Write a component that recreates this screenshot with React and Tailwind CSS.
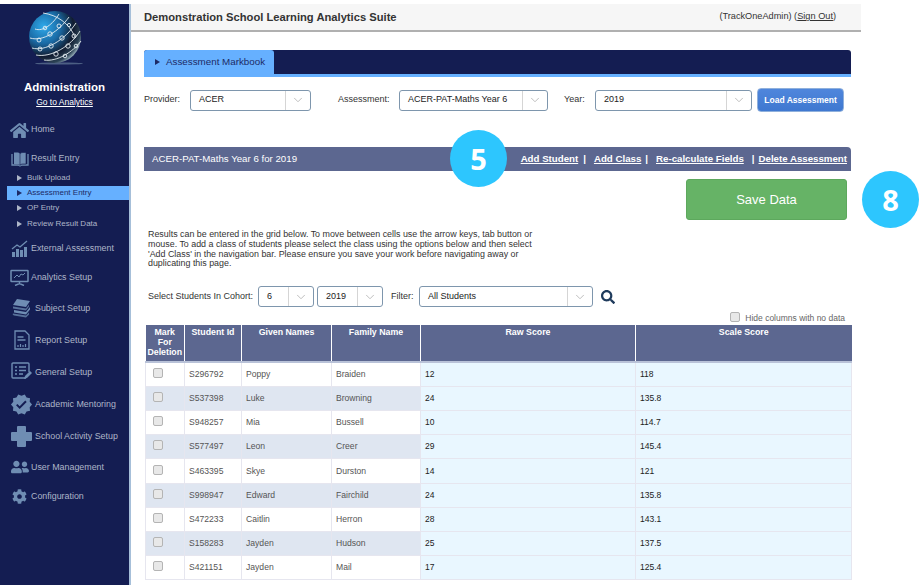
import React from "react";
import { FaHome, FaCog, FaUserFriends, FaSearch } from "react-icons/fa";
import { MdVerified } from "react-icons/md";
import { ChevronDown } from "lucide-react";

const ACCENT = "#2dc6fe";

const Globe = () => (
  <svg width="58" height="56" viewBox="0 0 58 56">
    <defs>
      <radialGradient id="ball" cx="0.28" cy="0.3" r="0.8">
        <stop offset="0" stopColor="#2fa9ea" />
        <stop offset="0.4" stopColor="#1a6ba6" />
        <stop offset="0.72" stopColor="#111c30" />
        <stop offset="0.9" stopColor="#2d4456" />
        <stop offset="1" stopColor="#9db4bf" />
      </radialGradient>
    </defs>
    <ellipse cx="32" cy="53.500" rx="24" ry="1" fill="#4c5f83" />
    <circle cx="28" cy="27" r="26" fill="url(#ball)" />
    <g fill="none" stroke="#e6eef3" strokeWidth="0.9">
      <path d="M5 38 C18 42 38 30 49 13" />
      <path d="M3 28 C16 32 32 21 42 7" />
      <path d="M9 45 C24 48 44 36 53 21" />
      <path d="M17 50 C30 52 46 42 54 31" />
      <path d="M16 3 C30 5 42 13 48 27" />
      <path d="M8 19 C16 22 26 14 32 4" />
      <circle cx="13" cy="39" r="2" />
      <circle cx="24" cy="36" r="2.200" />
      <circle cx="35" cy="28" r="2.200" />
      <circle cx="12" cy="30" r="2" />
      <circle cx="23" cy="24" r="2.200" />
      <circle cx="32" cy="16" r="2" />
      <circle cx="29" cy="44" r="2.200" />
      <circle cx="41" cy="36" r="2.200" />
      <circle cx="47" cy="26" r="2" />
      <circle cx="42" cy="15" r="1.600" />
      <circle cx="38" cy="46" r="1.800" />
      <circle cx="49" cy="36" r="1.800" />
      <circle cx="18" cy="18" r="1.800" />
    </g>
  </svg>
);

const BookIcon = () => (
  <svg width="18" height="17" viewBox="0 0 18 17" fill="none" stroke="currentColor" strokeWidth="1.300">
    <path d="M1 3v11h6c1 0 2 .5 2 1.500 0-1 1-1.500 2-1.500h6V3" />
    <path d="M3 1.500h3c1.500 0 3 .5 3 2v11c0-1-1.500-1.500-3-1.500H3z" fill="currentColor" stroke="none" />
    <path d="M15 1.500h-3c-1.500 0-3 .5-3 2v11c0-1 1.500-1.500 3-1.500h3z" fill="currentColor" stroke="#141d52" strokeWidth="0.6" />
  </svg>
);

const BarsIcon = () => (
  <svg width="18" height="17" viewBox="0 0 18 17" fill="currentColor">
    <rect x="1" y="12" width="3" height="5" />
    <rect x="5" y="9" width="3" height="8" />
    <rect x="9" y="10" width="3" height="7" />
    <rect x="13" y="7" width="3" height="10" />
    <path d="M1 9l5-4 3 2 7-6" fill="none" stroke="currentColor" strokeWidth="1.300" />
  </svg>
);

const BoardIcon = () => (
  <svg width="19" height="17" viewBox="0 0 19 17" fill="none" stroke="currentColor" strokeWidth="1.500">
    <rect x="1" y="1.500" width="17" height="11" rx="0.5" />
    <path d="M4 9l3-3 2 2 2-3 2 1 2-2" strokeWidth="1" />
    <path d="M9.500 12.500v2M5 16.500l4.500-2 4.500 2" />
  </svg>
);

const BooksIcon = () => (
  <svg width="19" height="20" viewBox="0 0 19 20" fill="currentColor">
    <path d="M5 1l13 2-4 6L1 7z" />
    <path d="M1 8.500l13 2 3-4v2l-3 4-13-2z" opacity="0.75" />
    <path d="M2 12l12 2 4-5v2.500l-4 5-12-2z" />
    <path d="M1 15.500l13 2 3-3v2l-3 3-12-2c-1.500-.5-1.500-1.500-1-2z" opacity="0.75" />
  </svg>
);

const ReportIcon = () => (
  <svg width="16" height="20" viewBox="0 0 16 20" fill="none" stroke="currentColor" strokeWidth="1.300">
    <path d="M1 1h10l4 4v14H1z" />
    <path d="M3.500 7h6M3.500 10h8" />
    <path d="M4 17v-2M6.500 17v-3M9 17v-2M11.500 17v-3" strokeWidth="1.200" />
  </svg>
);

const ListEditIcon = () => (
  <svg width="21" height="20" viewBox="0 0 21 20" fill="none" stroke="currentColor" strokeWidth="1.400">
    <path d="M15 16H2a1 1 0 0 1-1-1V2a1 1 0 0 1 1-1h15a1 1 0 0 1 1 1v8" />
    <path d="M4 5h2M8 5h7M4 8.500h2M8 8.500h7M4 12h2M8 12h4" />
    <path d="M13 17l1-3 5-5 2 2-5 5z" fill="currentColor" stroke="none" />
  </svg>
);

const CrossIcon = () => (
  <svg width="21" height="21" viewBox="0 0 21 21" fill="currentColor">
    <path d="M6 1a1 1 0 0 1 1-1h7a1 1 0 0 1 1 1v5h5a1 1 0 0 1 1 1v7a1 1 0 0 1-1 1h-5v5a1 1 0 0 1-1 1H7a1 1 0 0 1-1-1v-5H1a1 1 0 0 1-1-1V7a1 1 0 0 1 1-1h5z" />
  </svg>
);

const MENU = [
  { label: "Home", icon: <FaHome size={19} />, cls: "mt-[12px] h-[20px]", gap: "w-[19px]" },
  { label: "Result Entry", icon: <BookIcon />, cls: "mt-[9px] h-[20px]", gap: "w-[19px]" },
  { label: "External Assessment", icon: <BarsIcon />, cls: "mt-[6px] h-[22px]", gap: "w-[19px]" },
  { label: "Analytics Setup", icon: <BoardIcon />, cls: "mt-[7px] h-[22px]", gap: "w-[19px]" },
  { label: "Subject Setup", icon: <BooksIcon />, cls: "mt-[9px] h-[22px]", gap: "w-[23px]" },
  { label: "Report Setup", icon: <ReportIcon />, cls: "mt-[10px] h-[22px]", gap: "w-[23px]" },
  { label: "General Setup", icon: <ListEditIcon />, cls: "mt-[10px] h-[22px]", gap: "w-[23px]" },
  { label: "Academic Mentoring", icon: <MdVerified size={23} />, cls: "mt-[10px] h-[22px]", gap: "w-[23px]" },
  { label: "School Activity Setup", icon: <CrossIcon />, cls: "mt-[10px] h-[22px]", gap: "w-[23px]" },
  { label: "User Management", icon: <FaUserFriends size={18} />, cls: "mt-[9px] h-[22px]", gap: "w-[19px]" },
  { label: "Configuration", icon: <FaCog size={15} />, cls: "mt-[7px] h-[22px]", gap: "w-[19px]" },
];

const SUB = ["Bulk Upload", "Assessment Entry", "OP Entry", "Review Result Data"];

const STUDENTS = [
  ["S296792", "Poppy", "Braiden", "12", "118"],
  ["S537398", "Luke", "Browning", "24", "135.8"],
  ["S948257", "Mia", "Bussell", "10", "114.7"],
  ["S577497", "Leon", "Creer", "29", "145.4"],
  ["S463395", "Skye", "Durston", "14", "121"],
  ["S998947", "Edward", "Fairchild", "24", "135.8"],
  ["S472233", "Caitlin", "Herron", "28", "143.1"],
  ["S158283", "Jayden", "Hudson", "25", "137.5"],
  ["S421151", "Jayden", "Mail", "17", "125.4"],
];

const MenuRow = ({ item }) => (
  <div className={`flex items-center pl-[10px] text-[8.9px] text-[#aeb6c8] ${item.cls}`}>
    <span className={`flex justify-center shrink-0 mr-[2px] text-[#6f8db3] ${item.gap}`}>{item.icon}</span>
    <span className="whitespace-nowrap">{item.label}</span>
  </div>
);

const Sidebar = () => (
  <aside className="w-[131px] h-[581px] shrink-0 mt-[4px] bg-[#141d52] border-r-[2px] border-[#a6bfd9] flex flex-col">
    <div className="flex justify-start mt-[6px] pl-[27px]">
      <Globe />
    </div>
    <div className="mt-[14px] text-center text-[11.500px] font-bold leading-[14px] text-white">Administration</div>
    <div className="mt-[3px] text-center text-[8.500px] leading-[11px] text-white underline">Go to Analytics</div>
    <MenuRow item={MENU[0]} />
    <MenuRow item={MENU[1]} />
    <div className="mt-[1px] flex flex-col">
      {SUB.map((s) => (
        <div
          key={s}
          className={`flex items-center h-[13.300px] my-[1px] ml-[7px] pl-[10px] text-[8px] ${
            s === "Assessment Entry" ? "bg-[#66b0ff] text-[#1d2b66]" : "text-[#aeb6c8]"
          }`}
        >
          <span className="w-0 h-0 mr-[5px] border-y-[3.500px] border-y-transparent border-l-[5px] border-l-current" />
          {s}
        </div>
      ))}
    </div>
    {MENU.slice(2).map((m) => (
      <MenuRow key={m.label} item={m} />
    ))}
  </aside>
);

const Select = ({ value, width, arrow = "w-[25px]" }) => (
  <div className={`flex items-center h-[21px] shrink-0 rounded-[3px] border border-[#7e96ad] bg-white text-[9px] text-[#222] ${width}`}>
    <span className="flex-1 pl-[8px] whitespace-nowrap">{value}</span>
    <span className={`flex items-center justify-center h-full border-l border-[#d5d5d5] text-[#b5b5b5] ${arrow}`}>
      <ChevronDown size={14} strokeWidth={1.5} />
    </span>
  </div>
);

const Step = ({ n }) => (
  <div
    className="flex items-center justify-center w-[57px] h-[57px] rounded-full text-white text-[29px] font-bold font-['Open_Sans',sans-serif]"
    style={{ backgroundColor: ACCENT }}
  >
    {n}
  </div>
);

const Th = ({ children, width }) => (
  <th className={`align-top pt-[3px] text-center text-[8.800px] leading-[9.700px] font-bold text-white border-r border-white last:border-r-0 ${width}`}>
    {children}
  </th>
);

const Table = () => (
  <table className="w-[706px] ml-[1px] table-fixed border-collapse">
    <thead>
      <tr className="h-[37px] bg-[#5c6790] border-b-[2px] border-[#b9c2d8]">
        <Th width="w-[39px]">
          Mark
          <br />
          For
          <br />
          Deletion
        </Th>
        <Th width="w-[57px]">Student Id</Th>
        <Th width="w-[90px]">Given Names</Th>
        <Th width="w-[89px]">Family Name</Th>
        <Th width="w-[215px]">Raw Score</Th>
        <Th width="w-[216px]">Scale Score</Th>
      </tr>
    </thead>
    <tbody>
      {STUDENTS.map((s, i) => {
        const shade = i % 2 === 1 ? "bg-[#dfe6f1]" : "bg-white";
        const cell = `border border-[#e6e6ef] pl-[4px] text-[8.600px] text-[#555] ${shade}`;
        const score = "border border-[#e6e6ef] pl-[4px] text-[8.500px] text-[#222] bg-[#e9f7ff]";
        return (
          <tr key={s[0]} className="h-[24.200px]">
            <td className={`${shade} border border-[#e6e6ef] pl-[7px]`}>
              <span className="block w-[10px] h-[10px] mb-[3px] rounded-[2px] border border-[#b4b4b4] bg-[#e8e8e8]" />
            </td>
            <td className={cell}>{s[0]}</td>
            <td className={cell}>{s[1]}</td>
            <td className={cell}>{s[2]}</td>
            <td className={score}>{s[3]}</td>
            <td className={score}>{s[4]}</td>
          </tr>
        );
      })}
    </tbody>
  </table>
);

export default function App() {
  return (
    <div className="flex w-[921px] h-[585px] overflow-hidden bg-white font-['Liberation_Sans',Arial,sans-serif]">
      <Sidebar />
      <main className="w-[730px] shrink-0 flex flex-col">
        <header className="flex items-center justify-between h-[28px] mt-[4px] pl-[13px] pr-[25px] bg-[#f6f6f6] border-b-[2px] border-[#b0b0b0]">
          <span className="text-[11.200px] font-bold text-[#333]">Demonstration School Learning Analytics Suite</span>
          <span className="text-[9.200px] text-[#333]">
            (TrackOneAdmin) (<span className="underline">Sign Out</span>)
          </span>
        </header>

        <div className="ml-[13px] w-[707px] flex flex-col">
          {/* tab strip */}
          <div className="mt-[18px] h-[27px] bg-[#141d52] rounded-t-[3px] border-b-[3px] border-[#66b0ff] flex">
            <div className="flex items-center w-[130px] pl-[11px] bg-[#66b0ff] rounded-t-[3px] text-[9.800px] text-[#1d2b66]">
              <span className="w-0 h-0 mr-[6px] border-y-[3.500px] border-y-transparent border-l-[5px] border-l-current" />
              Assessment Markbook
            </div>
          </div>

          {/* assessment picker */}
          <div className="mt-[11px] h-[24px] flex items-center text-[9px] text-[#333]">
            <span className="w-[46px]">Provider:</span>
            <Select value="ACER" width="w-[121px]" />
            <span className="ml-[27px] w-[61px]">Assessment:</span>
            <Select value="ACER-PAT-Maths Year 6" width="w-[149px]" />
            <span className="ml-[16px] w-[31px]">Year:</span>
            <Select value="2019" width="w-[157px]" />
            <button className="ml-[5px] w-[87px] h-[24px] rounded-[4px] bg-gradient-to-b from-[#4f86dc] to-[#3f78d0] border border-[#8fb0dc] text-[8.500px] font-bold text-white">
              Load Assessment
            </button>
          </div>

          {/* title bar */}
          <div className="relative mt-[35px] h-[24px] flex items-center justify-between pl-[8px] pr-[4px] rounded-tr-[4px] bg-[#5c6790] text-white text-[9.700px]">
            <span>ACER-PAT-Maths Year 6 for 2019</span>
            <span className="flex font-bold whitespace-nowrap">
              <span className="underline">Add Student</span>
              <span className="ml-[5px]">|</span>
              <span className="ml-[8px] underline">Add Class</span>
              <span className="ml-[4px]">|</span>
              <span className="ml-[8px] underline">Re-calculate Fields</span>
              <span className="ml-[8px]">|</span>
              <span className="ml-[4px] underline">Delete Assessment</span>
            </span>
            <div className="absolute left-[306px] top-[-17px]">
              <Step n="5" />
            </div>
          </div>

          {/* save */}
          <div className="relative mt-[8px] h-[41px] flex justify-end pr-[4px]">
            <button className="w-[161px] h-[41px] rounded-[3px] bg-[#66b366] border border-[#5da85d] text-[13px] text-white">
              Save Data
            </button>
            <div className="absolute left-[718px] top-[-8px]">
              <Step n="8" />
            </div>
          </div>

          <p className="mt-[10px] ml-[4px] w-[392px] text-[8.900px] leading-[9.800px] text-[#333]">
            Results can be entered in the grid below. To move between cells use the arrow keys, tab button or mouse. To
            add a class of students please select the class using the options below and then select 'Add Class' in the
            navigation bar. Please ensure you save your work before navigating away or duplicating this page.
          </p>

          {/* cohort filter */}
          <div className="mt-[17px] ml-[4px] flex items-center h-[21px] text-[9px] text-[#333]">
            <span className="w-[110px] whitespace-nowrap">Select Students In Cohort:</span>
            <Select value="6" width="w-[56px]" />
            <span className="w-[3px]" />
            <Select value="2019" width="w-[66px]" />
            <span className="ml-[8px] w-[28px]">Filter:</span>
            <Select value="All Students" width="w-[174px]" />
            <FaSearch size={14} className="ml-[8px] text-[#1f3b5c]" />
          </div>

          <div className="mt-[5px] h-[13px] flex items-center justify-end pr-[6px] text-[8.500px] text-[#666]">
            <span className="w-[10px] h-[10px] mr-[5px] mb-[3px] rounded-[2px] border border-[#b4b4b4] bg-[#e8e8e8]" />
            Hide columns with no data
          </div>

          <Table />
        </div>
      </main>
    </div>
  );
}
